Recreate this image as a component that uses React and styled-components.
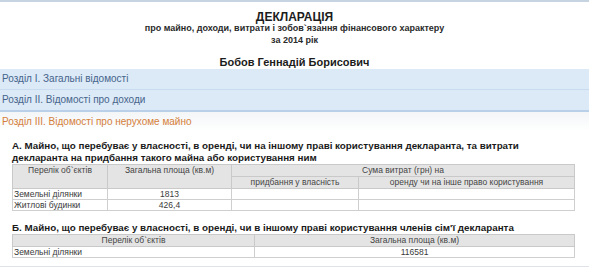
import React from 'react'
import styled, { createGlobalStyle } from 'styled-components'

const GlobalStyle = createGlobalStyle`
  html, body {
    margin: 0;
    padding: 0;
    background: #ffffff;
  }
  body {
    font-family: "Liberation Sans", Arial, sans-serif;
    color: #222;
  }
`

const sections = [
  { id: 1, title: 'Розділ I. Загальні відомості' },
  { id: 2, title: 'Розділ II. Відомості про доходи', last: true },
  { id: 3, title: 'Розділ III. Відомості про нерухоме майно', active: true },
]

const ownedA = [
  { name: 'Земельні ділянки', area: '1813' },
  { name: 'Житлові будинки', area: '426,4' },
]

const familyB = [{ name: 'Земельні ділянки', area: '116581' }]

const App = () => (
  <Page>
    <GlobalStyle />
    <Header>
      <Title>ДЕКЛАРАЦІЯ</Title>
      <Subtitle>про майно, доходи, витрати і зобов`язання фінансового характеру</Subtitle>
      <Subtitle>за 2014 рік</Subtitle>
      <Person>Бобов Геннадій Борисович</Person>
    </Header>

    {sections.map(section => (
      <SectionBar key={section.id} active={section.active} last={section.last}>
        {section.title}
      </SectionBar>
    ))}

    <Content>
      <Heading>
        А. Майно, що перебуває у власності, в оренді, чи на іншому праві
        користування декларанта, та витрати декларанта на придбання такого
        майна або користування ним
      </Heading>
      <Table>
        <colgroup>
          <col style={{ width: 95 }} />
          <col style={{ width: 124 }} />
          <col style={{ width: 127 }} />
          <col />
        </colgroup>
        <thead>
          <tr>
            <Th rowSpan={2} valign="top">
              Перелік об`єктів
            </Th>
            <Th rowSpan={2} valign="top">
              Загальна площа (кв.м)
            </Th>
            <Th colSpan={2}>Сума витрат (грн) на</Th>
          </tr>
          <tr>
            <Th>придбання у власність</Th>
            <Th>оренду чи на інше право користування</Th>
          </tr>
        </thead>
        <tbody>
          {ownedA.map(row => (
            <tr key={row.name}>
              <Td>{row.name}</Td>
              <Td center>{row.area}</Td>
              <Td />
              <Td />
            </tr>
          ))}
        </tbody>
      </Table>

      <Heading spaced>
        Б. Майно, що перебуває у власності, в оренді, чи в іншому праві
        користування членів сім'ї декларанта
      </Heading>
      <Table>
        <colgroup>
          <col style={{ width: 242 }} />
          <col />
        </colgroup>
        <thead>
          <tr>
            <Th>Перелік об`єктів</Th>
            <Th>Загальна площа (кв.м)</Th>
          </tr>
        </thead>
        <tbody>
          {familyB.map(row => (
            <tr key={row.name}>
              <Td>{row.name}</Td>
              <Td center>{row.area}</Td>
            </tr>
          ))}
        </tbody>
      </Table>
    </Content>
  </Page>
)

const Page = styled.div`
  width: 589px;
  border-top: 2px solid #c6d3e0;
`

const Header = styled.div`
  display: flex;
  flex-direction: column;
  align-items: center;
  padding-top: 9px;
`

const Title = styled.div`
  font-size: 12px;
  font-weight: bold;
  line-height: 12px;
  color: #1c1c1c;
`

const Subtitle = styled.div`
  font-size: 9px;
  font-weight: bold;
  line-height: 11.5px;
  color: #2a2a2a;
`

const Person = styled.div`
  margin-top: 9.5px;
  font-size: 11px;
  font-weight: bold;
  line-height: 13px;
  color: #1c1c1c;
`

const SectionBar = styled.div`
  height: 20px;
  padding-left: 2px;
  display: flex;
  align-items: center;
  font-size: 10px;
  color: ${props => (props.active ? '#d4803a' : '#46648a')};
  background: ${props =>
    props.active ? 'linear-gradient(#f3f5f7, #ffffff)' : '#dce9f7'};
  border-bottom: ${props =>
    props.active
      ? 'none'
      : props.last
        ? '2px solid #b9d0e8'
        : '1px solid #c9dbee'};
`

const Content = styled.div`
  padding: 8px 14px 8px 12px;
  border-bottom: 1px solid #dfe3e8;
`

const Heading = styled.div`
  font-size: 9.8px;
  font-weight: bold;
  line-height: 12px;
  color: #1a1a1a;
  margin-top: ${props => (props.spaced ? '11px' : '0')};
`

const Table = styled.table`
  width: 100%;
  border-collapse: collapse;
  table-layout: fixed;
  font-size: 8.5px;
  line-height: 10px;
  color: #3a3a3a;
`

const Th = styled.th`
  background: #e4e4e4;
  border: 1px solid #c9c9c9;
  font-weight: normal;
  color: #444;
  padding: 0.5px 1px;
  text-align: center;
`

const Td = styled.td`
  border: 1px solid #cfcfcf;
  padding: 0 1px;
  height: 10px;
  text-align: ${props => (props.center ? 'center' : 'left')};
`

export default App
